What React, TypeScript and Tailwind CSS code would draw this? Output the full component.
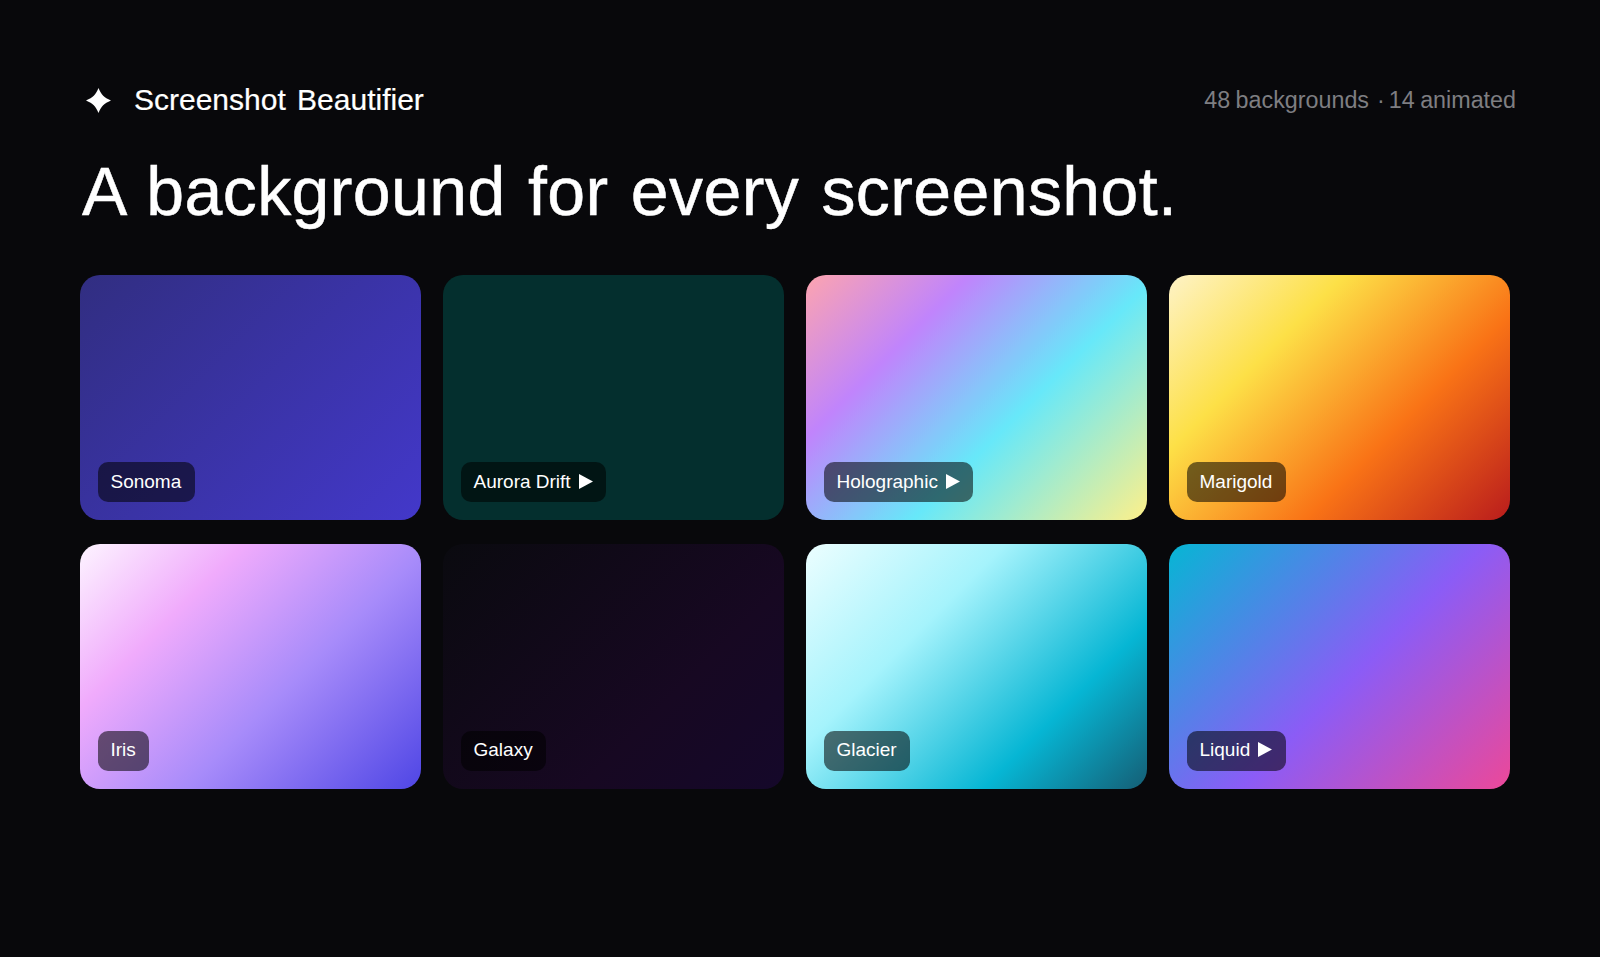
const cards = [
  { name: 'Sonoma', animated: false, bg: 'bg-[linear-gradient(135deg,#312e81,#4338ca)]' },
  { name: 'Aurora Drift', animated: true, bg: 'bg-[#042f2e]' },
  { name: 'Holographic', animated: true, bg: 'bg-[linear-gradient(135deg,#fda4af,#c084fc_28%,#67e8f9_60%,#fef08a)]' },
  { name: 'Marigold', animated: false, bg: 'bg-[linear-gradient(135deg,#fef3c7,#fde047_30%,#f97316_65%,#b91c1c)]' },
  { name: 'Iris', animated: false, bg: 'bg-[linear-gradient(135deg,#fdf4ff,#f0abfc_28%,#a78bfa_60%,#4f46e5)]' },
  { name: 'Galaxy', animated: false, bg: 'bg-[linear-gradient(135deg,#0a0a0f,#170822_65%,#15082a)]' },
  { name: 'Glacier', animated: false, bg: 'bg-[linear-gradient(135deg,#ecfeff,#a5f3fc_34%,#06b6d4_72%,#155e75)]' },
  { name: 'Liquid', animated: true, bg: 'bg-[linear-gradient(135deg,#06b6d4,#8b5cf6_54%,#ec4899)]' },
];

const App = () => {
  return (
    <div className="min-h-[957px] bg-[#08080b] pt-[84px] px-20 font-['Liberation_Sans',sans-serif] text-white">
      <header className="flex justify-between items-center h-[32px] pr-1">
        <div className="flex items-center gap-[23px] pl-1.5">
          <svg width="25" height="25" viewBox="0 0 24 24" fill="#fff">
            <path d="M12 0C15 7 17 9 24 12C17 15 15 17 12 24C9 17 7 15 0 12C7 9 9 7 12 0Z" />
          </svg>
          <span className="text-[30px] leading-8 [word-spacing:3px] [-webkit-text-stroke:0.2px_#fff]">Screenshot Beautifier</span>
        </div>
        <span className="text-[23.3px] leading-8 [word-spacing:-1px] text-[#7e7e82]">
          48 backgrounds<span className="ml-[8px] mr-[4px]">·</span>14 animated
        </span>
      </header>

      <h1 className="mt-[35px] pl-[2px] text-[68px] leading-[80px] tracking-[0.4px] [word-spacing:3px] [-webkit-text-stroke:0.5px_#fff]">
        A background for every screenshot.
      </h1>

      <div className="mt-[44px] grid grid-cols-[repeat(4,340.5px)] gap-x-[22.5px] gap-y-[23.5px]">
        {cards.map((card) => (
          <div key={card.name} className={`relative h-[245px] rounded-[20px] ${card.bg}`}>
            <div className="absolute left-[18px] bottom-[18px] h-10 pl-[12.5px] pr-[13.5px] flex items-center gap-2 rounded-[10px] bg-black/55 text-[19px] whitespace-nowrap">
              {card.name}
              {card.animated && (
                <svg className="-mt-0.5" width="14" height="15" viewBox="0 0 14 15" fill="#fff">
                  <path d="M0 0L14 7.5L0 15Z" />
                </svg>
              )}
            </div>
          </div>
        ))}
      </div>
    </div>
  );
};

export default App;
